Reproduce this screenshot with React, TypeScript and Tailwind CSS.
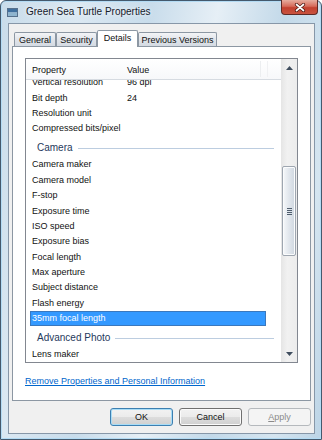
import React from "react";

type Item =
  | { kind: "row"; p: string; v?: string; sel?: boolean }
  | { kind: "group"; label: string };

const items: Item[] = [
  { kind: "row", p: "Vertical resolution", v: "96 dpi" },
  { kind: "row", p: "Bit depth", v: "24" },
  { kind: "row", p: "Resolution unit" },
  { kind: "row", p: "Compressed bits/pixel" },
  { kind: "group", label: "Camera" },
  { kind: "row", p: "Camera maker" },
  { kind: "row", p: "Camera model" },
  { kind: "row", p: "F-stop" },
  { kind: "row", p: "Exposure time" },
  { kind: "row", p: "ISO speed" },
  { kind: "row", p: "Exposure bias" },
  { kind: "row", p: "Focal length" },
  { kind: "row", p: "Max aperture" },
  { kind: "row", p: "Subject distance" },
  { kind: "row", p: "Flash energy" },
  { kind: "row", p: "35mm focal length", sel: true },
  { kind: "group", label: "Advanced Photo" },
  { kind: "row", p: "Lens maker" },
];

function Tab({ label, w, selected }: { label: string; w: string; selected?: boolean }) {
  if (selected) {
    return (
      <div
        className={`${w} h-[17px] -mb-px relative z-10 bg-white border border-b-0 border-[#8c97a3] rounded-t-[2px] flex items-center justify-center pb-[2px]`}
      >
        {label}
      </div>
    );
  }
  return (
    <div
      className={`${w} h-[14px] bg-[linear-gradient(#f3f4f6,#dfe3e9_55%,#d4dae2)] border border-b-0 border-[#8c97a3] rounded-t-[2px] flex items-center justify-center pt-px`}
    >
      {label}
    </div>
  );
}

function Row({ p, v, sel }: { p: string; v?: string; sel?: boolean }) {
  return (
    <div
      className={`h-[15.4px] ml-[4px] w-[236px] flex items-center pl-[2px] whitespace-nowrap ${
        sel ? "bg-[#3399ff] text-white shadow-[inset_0_0_0_1px_#3a78bd]" : "text-[#111]"
      }`}
    >
      <span className="w-[95px] shrink-0">{p}</span>
      {v ? <span>{v}</span> : null}
    </div>
  );
}

function Group({ label }: { label: string }) {
  return (
    <div className="h-[20.6px] flex items-center pt-[3px] pl-[11px] pr-[7px]">
      <span className="text-[10px] text-[#1f3a5c] whitespace-nowrap">{label}</span>
      <div className="ml-[5px] flex-1 h-px bg-[#bccde0]" />
    </div>
  );
}

function Button({ label, def, disabled }: { label: string; def?: boolean; disabled?: boolean }) {
  if (disabled) {
    return (
      <div className="w-[63px] h-[18px] rounded-[3px] border border-[#b5b9bd] bg-[#f4f4f4] flex items-center justify-center text-[#8a8a8a]">
        <span>
          <span className="underline">A</span>pply
        </span>
      </div>
    );
  }
  return (
    <div
      className={`w-[63px] h-[18px] rounded-[3px] border ${
        def ? "border-[#3c7fb1] shadow-[inset_0_0_0_1px_#a8dcf6]" : "border-[#707070] shadow-[inset_0_0_0_1px_#fbfbfb]"
      } bg-[linear-gradient(#f2f2f2,#ebebeb_50%,#dddddd_50%,#cfcfcf)] flex items-center justify-center text-[#111]`}
    >
      {label}
    </div>
  );
}

export default function App() {
  return (
    <div className="w-[322px] h-[440px] overflow-hidden font-['Liberation_Sans',Arial,sans-serif] text-[9px] leading-none text-black bg-white">
      <div className="relative w-full h-full flex flex-col border border-[#44596d] rounded-t-[6px] shadow-[inset_0_0_0_1px_#b3dbf4] bg-[linear-gradient(100deg,#c9dcea_0%,#dbe8f2_20%,#c8dceb_38%,#e6eff6_55%,#c3d9e9_72%,#d5e5f0_88%,#bcd4e6_100%)]">
        {/* Title bar */}
        <div className="h-[22px] shrink-0 flex items-center pl-[6px]">
          <svg width="11" height="9" viewBox="0 0 11 9">
            <rect x="0.5" y="0.5" width="10" height="8" fill="#dfe9f2" stroke="#56708c" />
            <rect x="1" y="1" width="9" height="3.5" fill="#3f6f9e" />
            <rect x="1" y="4.5" width="9" height="3.5" fill="#8fb5cf" />
          </svg>
          <span className="ml-[8px] text-[10px] text-[#15202b] [text-shadow:0_0_4px_#ffffff]">
            Green Sea Turtle Properties
          </span>
        </div>
        <div className="absolute top-[-1px] right-[3px] w-[37px] h-[15px] rounded-b-[4px] border border-t-0 border-[#5e2a26] bg-[linear-gradient(#e6ad9f,#d66a5a_45%,#c2402f_55%,#c9533f)] flex items-center justify-center">
          <svg width="12" height="9" viewBox="0 0 12 9">
            <path d="M2.5 1.5 L9.5 7.5 M9.5 1.5 L2.5 7.5" stroke="#4a1712" strokeWidth="3.2" strokeLinecap="round" />
            <path d="M2.5 1.5 L9.5 7.5 M9.5 1.5 L2.5 7.5" stroke="#ffffff" strokeWidth="1.7" strokeLinecap="round" />
          </svg>
        </div>

        {/* Client area */}
        <div className="ml-[7px] mr-[6px] h-[411px] border border-[#8797a8] bg-[#f0f0f0] flex flex-col px-[3px] pt-[6px]">
          {/* Tabs */}
          <div className="h-[16px] flex items-end pl-[2px] text-[#111]">
            <Tab label="General" w="w-[42px]" />
            <Tab label="Security" w="w-[41px]" />
            <Tab label="Details" w="w-[41px]" selected />
            <Tab label="Previous Versions" w="w-[79px]" />
          </div>
          {/* Tab page */}
          <div className="h-[355px] border border-[#8c97a3] bg-white flex flex-col">
            {/* List view */}
            <div className="mx-[12px] mt-[11px] h-[305px] border border-[#828790] flex">
              <div className="flex-1 flex flex-col min-w-0">
                <div className="h-[21px] shrink-0 border-b border-[#d6dbe1] bg-[linear-gradient(#ffffff,#f7f8fa)] flex items-center pl-[6px] pt-[2px] relative text-[#111]">
                  <span className="w-[95px] shrink-0">Property</span>
                  <span>Value</span>
                  <div className="absolute left-[234px] top-[2px] bottom-[2px] w-px bg-[#eceef0]" />
                  <div className="absolute left-[241px] top-[2px] bottom-[2px] w-px bg-[#f0f1f3]" />
                </div>
                <div className="flex-1 overflow-hidden">
                  <div className="-mt-[5px]">
                    {items.map((it, i) =>
                      it.kind === "row" ? (
                        <Row key={i} p={it.p} v={it.v} sel={it.sel} />
                      ) : (
                        <Group key={i} label={it.label} />
                      )
                    )}
                  </div>
                </div>
              </div>
              {/* Scrollbar */}
              <div className="w-[16px] shrink-0 flex flex-col bg-[linear-gradient(90deg,#e5e5e5,#f1f1f1_40%,#ececec)]">
                <div className="h-[17px] shrink-0 flex items-center justify-center">
                  <svg width="7" height="4" viewBox="0 0 7 4">
                    <polygon points="0,4 3.5,0 7,4" fill="#3f4d5e" />
                  </svg>
                </div>
                <div className="flex-1">
                  <div className="mt-[90px] mx-[1px] h-[90px] rounded-[2px] border border-[#9ea6b0] bg-[linear-gradient(90deg,#f6f8fa,#e3e8ee_45%,#cfd7e0)] shadow-[inset_0_0_0_1px_#fbfcfd] flex flex-col items-center justify-center gap-[1px]">
                    <div className="w-[5px] h-px bg-[#4f5d6d]" />
                    <div className="w-[5px] h-px bg-[#4f5d6d]" />
                    <div className="w-[5px] h-px bg-[#4f5d6d]" />
                    <div className="w-[5px] h-px bg-[#4f5d6d]" />
                  </div>
                </div>
                <div className="h-[17px] shrink-0 flex items-center justify-center">
                  <svg width="7" height="4" viewBox="0 0 7 4">
                    <polygon points="0,0 7,0 3.5,4" fill="#3f4d5e" />
                  </svg>
                </div>
              </div>
            </div>
            {/* Link */}
            <div className="mt-[12px] ml-[12px] h-[12px] flex items-center">
              <span className="text-[#0066cc] underline">Remove Properties and Personal Information</span>
            </div>
          </div>
          {/* Buttons */}
          <div className="mt-[7px] flex justify-end gap-[6px]">
            <Button label="OK" def />
            <Button label="Cancel" />
            <Button label="Apply" disabled />
          </div>
        </div>
      </div>
    </div>
  );
}
